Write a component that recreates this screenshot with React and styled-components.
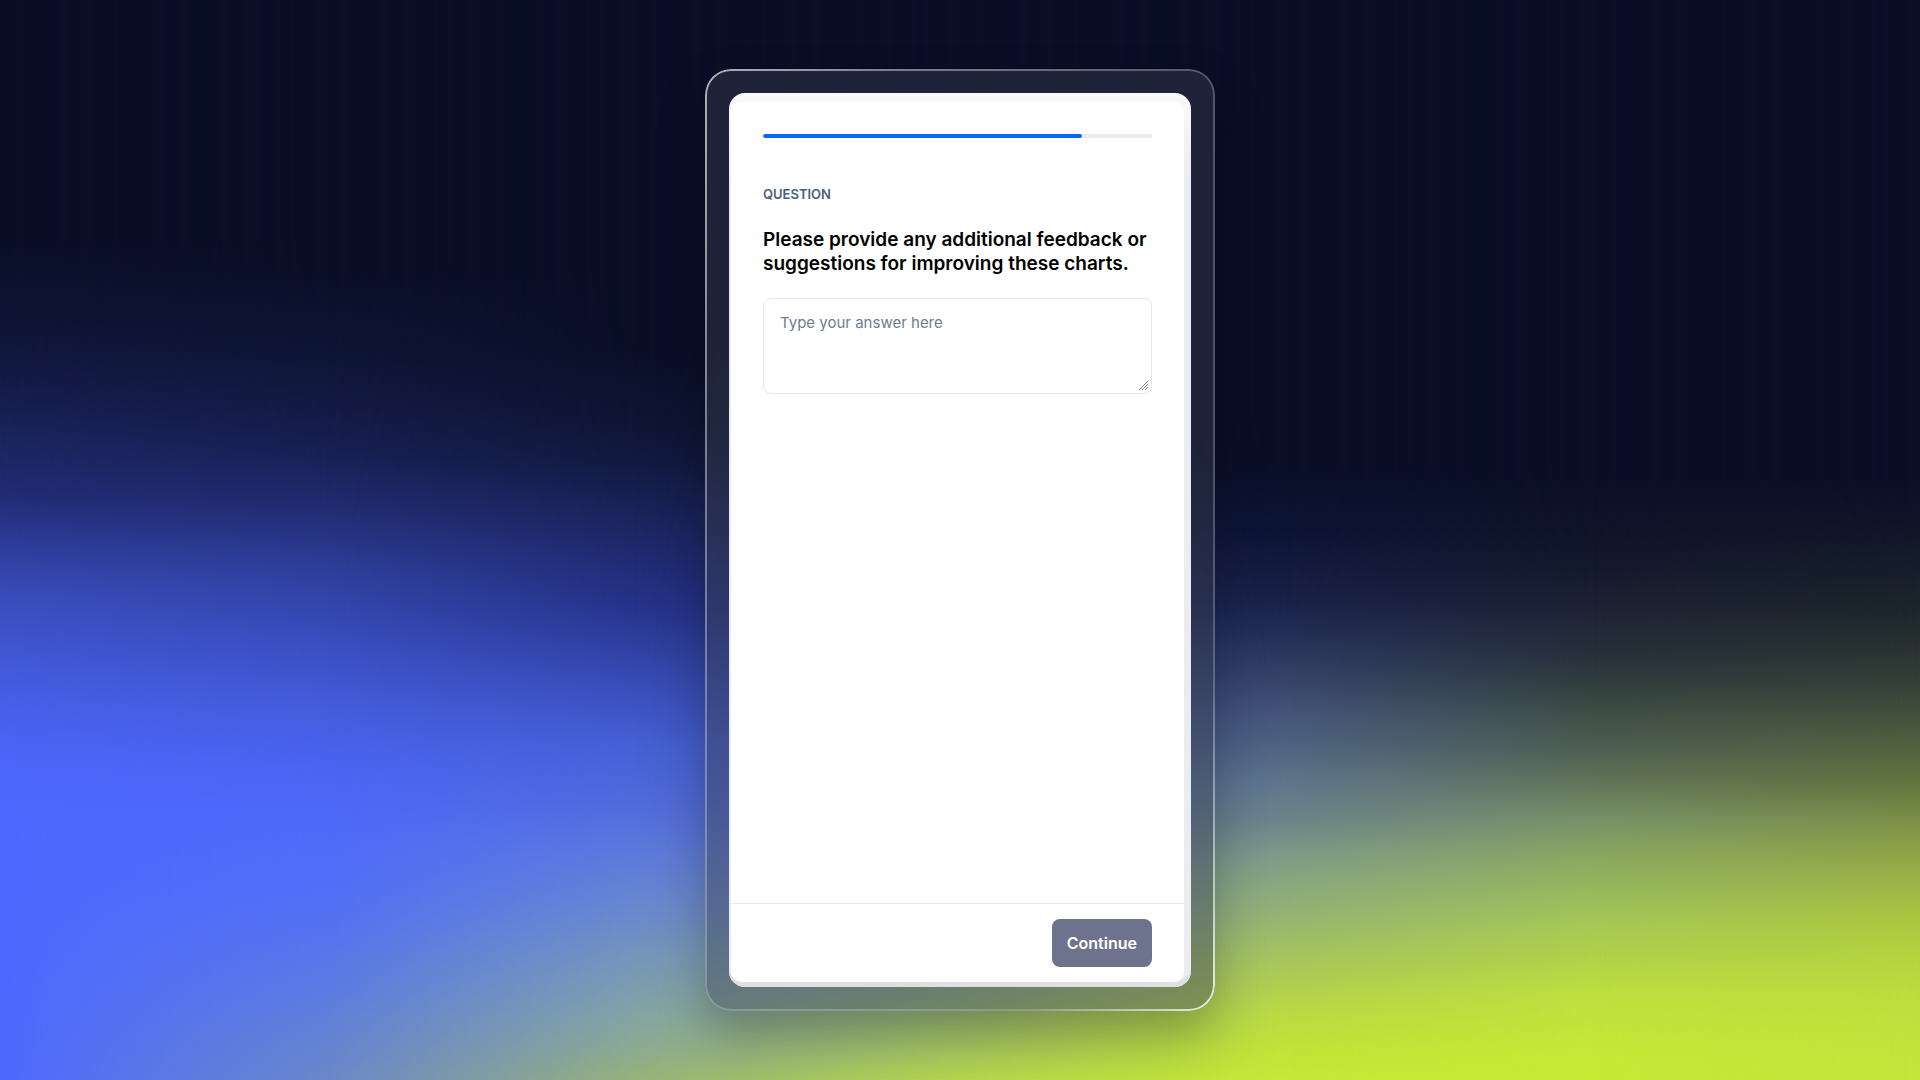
import React, { useState } from "react";
import styled, { createGlobalStyle } from "styled-components";

const GlobalStyle = createGlobalStyle`
  body {
    margin: 0;
    background: #0a0e27;
    font-family: Inter, "Liberation Sans", sans-serif;
  }
`;

// the backdrop and the content share one grid cell
const Page = styled.div`
  display: grid;
  min-height: 100vh;
`;

const Backdrop = styled.div`
  grid-area: 1 / 1;
  display: grid;
  overflow: hidden;
`;

// every band fades in over the one before it
const Band = styled.div`
  grid-area: 1 / 1;
  background: linear-gradient(180deg, ${(props) => props.$stops});
  mask-image: ${(props) =>
    props.$to === 0
      ? "none"
      : `linear-gradient(90deg, transparent ${props.$from}%, #000 ${props.$to}%)`};
`;

const Content = styled.main`
  grid-area: 1 / 1;
  z-index: 1;
  display: flex;
  justify-content: center;
  padding: 69px 16px;
  box-sizing: border-box;
`;

const Frame = styled.div`
  position: relative;
  display: flex;
  width: 100%;
  max-width: 510px;
  padding: 24px;
  box-sizing: border-box;
  border-radius: 26px;
  background: rgba(59, 66, 80, 0.43);
  box-shadow: 0 24px 48px rgba(0, 0, 0, 0.26);

  /* glass edge */
  &::before {
    content: "";
    position: absolute;
    inset: 0;
    padding: 2px;
    border-radius: 26px;
    background: linear-gradient(
      to bottom right,
      rgba(255, 255, 255, 0.65) 0%,
      rgba(255, 255, 255, 0.4) 20%,
      rgba(255, 255, 255, 0.24) 50%,
      rgba(255, 255, 255, 0.2) 82%,
      rgba(255, 255, 255, 0.6) 94%,
      rgba(255, 255, 255, 0.85) 100%
    );
    mask:
      linear-gradient(#000 0 0) content-box exclude,
      linear-gradient(#000 0 0);
    pointer-events: none;
  }
`;

const Card = styled.div`
  flex: 1;
  display: flex;
  min-width: 0;
  padding: 9px 7px 5px 2px;
  border-radius: 16px;
  background: linear-gradient(180deg, #f9f8fb 0%, #f7f6f9 2%, #ebecef 10%);
  box-shadow: inset 0 -5px #dfe0e2;
`;

const Sheet = styled.form`
  flex: 1;
  display: flex;
  flex-direction: column;
  min-width: 0;
  border-radius: 10px;
  background: #ffffff;
`;

const Body = styled.div`
  flex: 1;
  display: flex;
  flex-direction: column;
  padding: 32px;
`;

const Track = styled.div`
  height: 4px;
  margin-bottom: 48px;
  border-radius: 2px;
  background: #ebebf0;
  overflow: hidden;
`;

const Fill = styled.div`
  height: 100%;
  border-radius: 2px;
  background: #0068ff;
`;

const Eyebrow = styled.p`
  margin: 0 0 26px;
  font-size: 13px;
  line-height: 16px;
  font-weight: 600;
  color: #4d5f7a;
`;

const Question = styled.label`
  margin-bottom: 22px;
  font-size: 19px;
  line-height: 24px;
  font-weight: 600;
  color: #000000;
`;

const Answer = styled.textarea`
  height: 96px;
  padding: 12px 16px;
  box-sizing: border-box;
  border: 1px solid #e6e6ec;
  border-radius: 8px;
  background: #ffffff;
  color: #000000;
  font-family: inherit;
  font-size: 15px;
  line-height: 24px;
  resize: vertical;

  &::placeholder {
    color: #717c92;
    opacity: 1;
  }

  &::-webkit-resizer {
    background: url("data:image/svg+xml,%3Csvg xmlns='http://www.w3.org/2000/svg' width='15' height='15' fill='none' stroke='%23808080'%3E%3Cpath d='M3 12l9-9M6 12l6-6M9 12l3-3'/%3E%3C/svg%3E")
      no-repeat;
  }
`;

const Footer = styled.footer`
  display: flex;
  justify-content: flex-end;
  padding: 15px 32px;
  border-top: 1px solid #e9e9ed;
`;

const ContinueButton = styled.button`
  height: 48px;
  padding: 0 15px;
  border: none;
  border-radius: 8px;
  background: #6e738d;
  color: #ffffff;
  font-family: inherit;
  font-size: 16px;
  line-height: 24px;
  font-weight: 600;
`;

const bands = [
  {
    x: 0,
    stops:
      "#0a0e27 22%, #0e1535 30%, #141a46 35%, #1b2560 41%, #222c75 46%, #2f3e9e 51%, #394cba 55%, #4056d2 60%, #475fe8 65%, #4b65f8 70%, #4d69ff 75%",
  },
  {
    x: 17,
    stops:
      "#0a0e27 25%, #0e1636 33%, #141a45 38%, #182055 42%, #222c72 47%, #2e3f9c 53%, #3a4fc2 60%, #465dde 66%, #4a64f2 71%, #4e6afa 76%, #506ef8 82%, #5674ee 87%, #5c7ce2 92%, #6482d4 96%, #6a88ca 100%",
  },
  {
    x: 33,
    stops:
      "#0a0e27 32%, #0f1534 39%, #121a42 43%, #1a2258 47%, #26338a 56%, #2d3d9c 59%, #3a4fbc 64%, #4660d6 69%, #5069dc 74%, #5d79dc 79%, #6b8acc 85%, #7394be 88%, #7b9cb2 91%, #83a4a4 94%, #8caa92 97%, #97b278 100%",
  },
  {
    x: 50,
    stops:
      "#0a0e27 39%, #121940 47%, #1f2a68 57%, #34468f 66%, #4f68a5 75%, #7390a0 84%, #98b57a 93%, #b4d64c 100%",
  },
  {
    x: 67,
    stops:
      "#0a0e27 43%, #0c1434 49%, #161d42 54%, #1d264e 57%, #2a355c 60%, #374368 63%, #44547a 66%, #4e6380 69%, #61788c 73%, #6c8488 76%, #7d9a88 79%, #8aa97e 82%, #97b472 85%, #a3c260 88%, #b0cd52 91%, #badb42 94%, #c0e338 97%, #c5e935 100%",
  },
  {
    x: 83,
    stops:
      "#0a0e27 44%, #0f1429 49%, #141a2c 53%, #1f2435 57%, #28323b 61%, #34423f 64%, #445348 67%, #4c5c50 69%, #66785a 73%, #789268 76%, #8aa560 79%, #9abb5c 83%, #a8c954 86%, #b2d248 89%, #bde040 92%, #c1e43a 95%, #c6e935 98%",
  },
  {
    x: 100,
    stops:
      "#0a0e27 44%, #0f1427 48%, #151c2a 52%, #1e272c 57%, #293230 60%, #333f38 63%, #434f3c 66%, #52613f 69%, #65783f 73%, #7c9048 76%, #8ea446 79%, #9db548 82%, #a9c53f 85%, #b2d240 88%, #bbdc3e 92%, #c0e33c 96%, #c1e53a 100%",
  },
];

const progress = 82;

const App = () => {
  const [answer, setAnswer] = useState("");

  return (
    <Page>
      <GlobalStyle />
      <Backdrop aria-hidden="true">
        {bands.map((band, i) => (
          <Band
            key={band.x}
            $from={i > 0 ? bands[i - 1].x : 0}
            $to={band.x}
            $stops={band.stops}
          />
        ))}
      </Backdrop>

      <Content>
        <Frame>
          <Card>
            <Sheet onSubmit={(e) => e.preventDefault()}>
              <Body>
                <Track
                  role="progressbar"
                  aria-label="Survey progress"
                  aria-valuenow={progress}
                  aria-valuemin={0}
                  aria-valuemax={100}
                >
                  <Fill style={{ width: `${progress}%` }} />
                </Track>
                <Eyebrow>QUESTION</Eyebrow>
                <Question htmlFor="answer">
                  Please provide any additional feedback or suggestions for
                  improving these charts.
                </Question>
                <Answer
                  id="answer"
                  placeholder="Type your answer here"
                  value={answer}
                  onChange={(e) => setAnswer(e.target.value)}
                />
              </Body>
              <Footer>
                <ContinueButton type="submit" disabled={!answer}>
                  Continue
                </ContinueButton>
              </Footer>
            </Sheet>
          </Card>
        </Frame>
      </Content>
    </Page>
  );
};

export default App;
